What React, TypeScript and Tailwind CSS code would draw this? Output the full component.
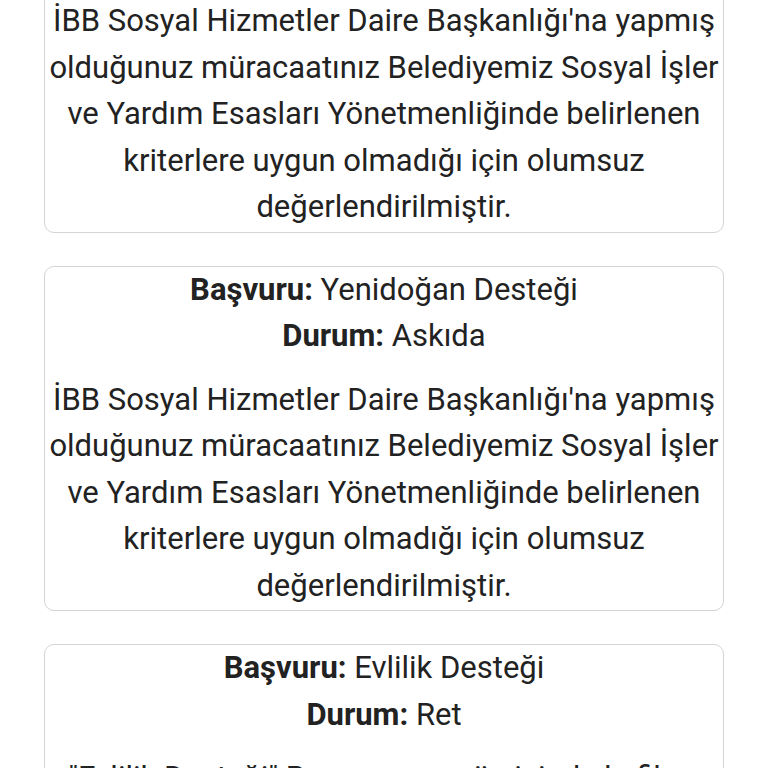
const RET_TEXT =
  "İBB Sosyal Hizmetler Daire Başkanlığı'na yapmış olduğunuz müracaatınız Belediyemiz Sosyal İşler ve Yardım Esasları Yönetmenliğinde belirlenen kriterlere uygun olmadığı için olumsuz değerlendirilmiştir.";

interface Application {
  type: string;
  status: string;
  message: string;
}

const applications: Application[] = [
  { type: "Sosyal Yardım", status: "Ret", message: RET_TEXT },
  { type: "Yenidoğan Desteği", status: "Askıda", message: RET_TEXT },
  {
    type: "Evlilik Desteği",
    status: "Ret",
    message:
      "\"Evlilik Desteği\" Başvurunuz gün içinde kefil ve evrak kontrolü yapılarak değerlendirilecektir.",
  },
];

function ApplicationCard({ app }: { app: Application }) {
  return (
    <div className="rounded-[10px] border border-[#d4d4d4] bg-white pt-0 pb-px text-center">
      <p>
        <span className="font-bold">Başvuru:</span> {app.type}
      </p>
      <p>
        <span className="font-bold">Durum:</span> {app.status}
      </p>
      <p className="mt-[17px]">{app.message}</p>
    </div>
  );
}

export default function App() {
  return (
    <div
      className="h-[768px] overflow-hidden bg-white text-[31px] leading-[46.5px] text-[#222222]"
      style={{ fontFamily: "Roboto, 'Noto Sans', sans-serif" }}
    >
      <div className="-mt-[113px] flex flex-col gap-[33px] px-[44px]">
        {applications.map((app, i) => (
          <ApplicationCard key={i} app={app} />
        ))}
      </div>
    </div>
  );
}
